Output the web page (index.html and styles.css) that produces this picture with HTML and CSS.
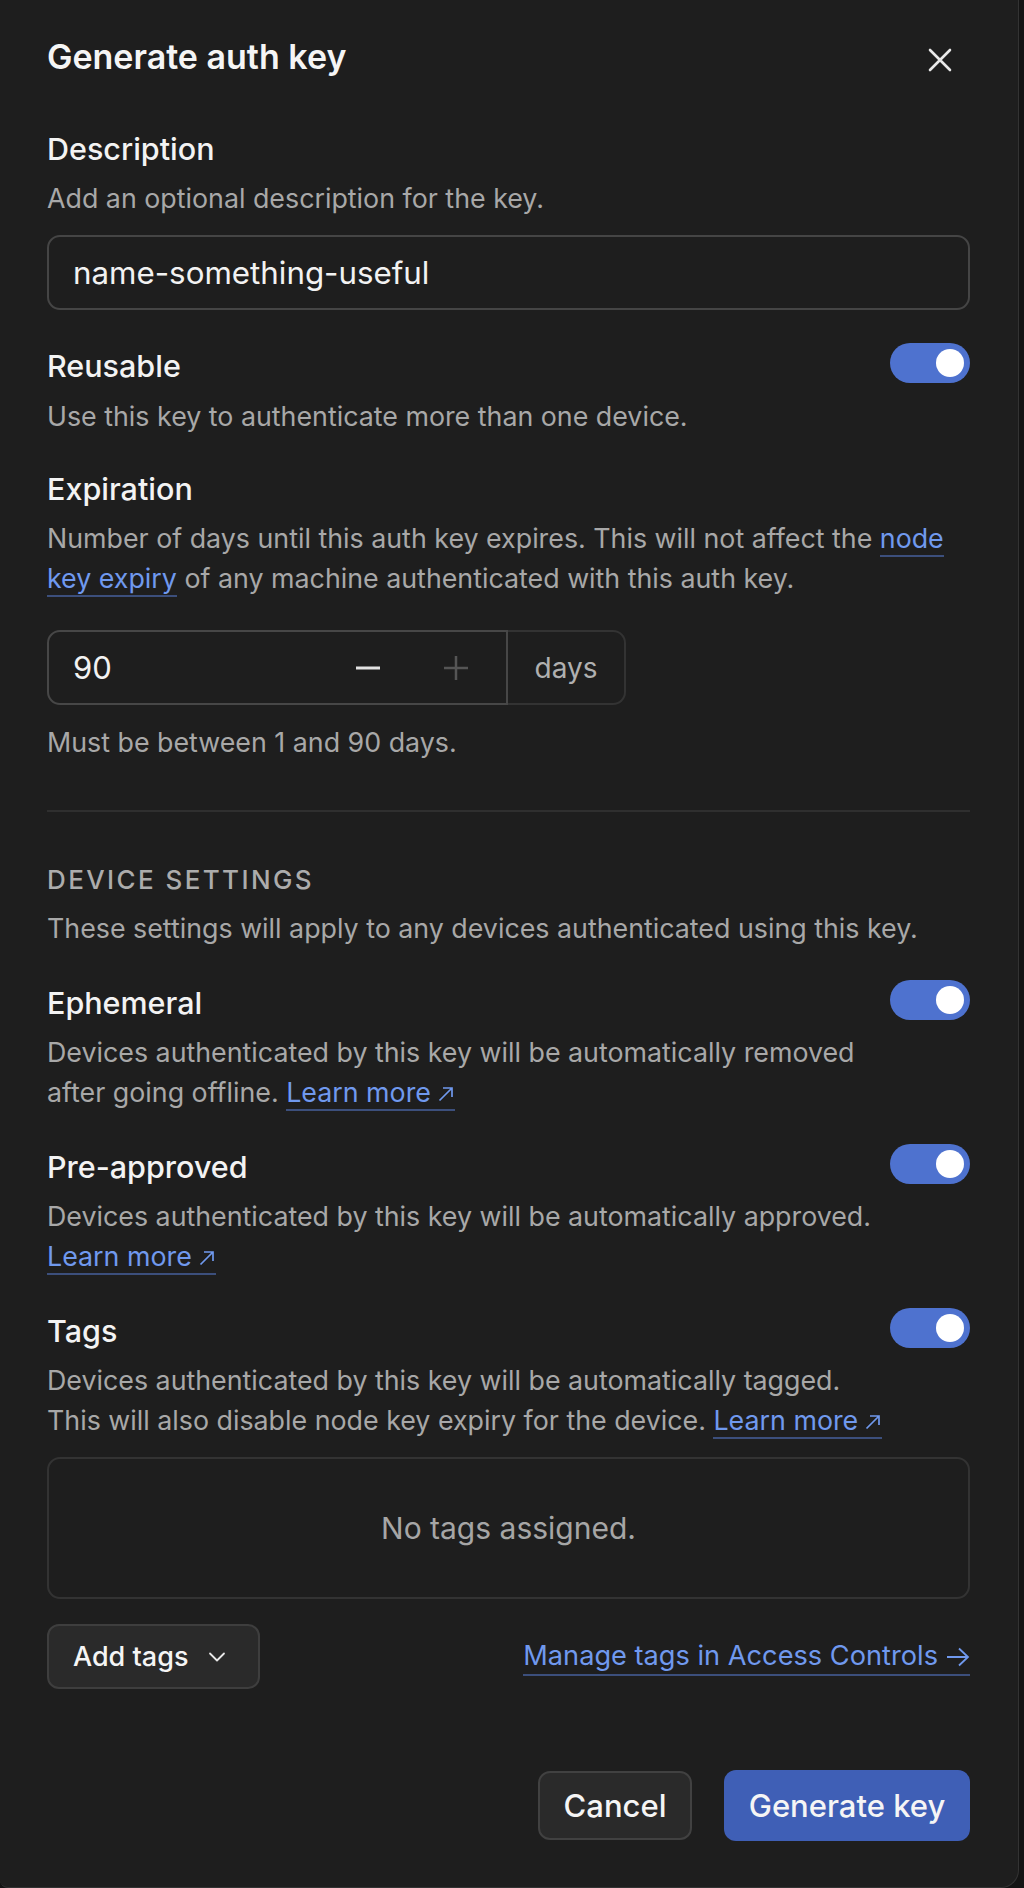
FILE: index.html
```html
<!DOCTYPE html>
<html lang="en">
<head>
<meta charset="utf-8">
<title>Generate auth key</title>
<link rel="stylesheet" href="styles.css">
</head>
<body>
<div class="dialog">
  <div class="header">
    <h1 class="title">Generate auth key</h1>
    <button class="close" aria-label="Close">
      <svg width="24" height="24" viewBox="0 0 24 24"><path d="M2 2L22 22M22 2L2 22" stroke="#e8e8e8" stroke-width="2.6" stroke-linecap="round"/></svg>
    </button>
  </div>

  <section class="field first">
    <div class="label">Description</div>
    <p class="hint">Add an optional description for the key.</p>
    <div class="text-input">name-something-useful</div>
  </section>

  <section class="field reusable">
    <div class="row">
      <div class="label">Reusable</div>
      <span class="toggle"><span class="knob"></span></span>
    </div>
    <p class="hint">Use this key to authenticate more than one device.</p>
  </section>

  <section class="field expiration">
    <div class="label">Expiration</div>
    <p class="hint">Number of days until this auth key expires. This will not affect the <a class="link">node key expiry</a> of any machine authenticated with this auth key.</p>
    <div class="number-group">
      <div class="number-input">
        <span class="number-value">90</span>
        <span class="stepper">
          <svg width="24" height="24" viewBox="0 0 24 24"><path d="M0 12H24" stroke="#e2e2e2" stroke-width="3"/></svg>
        </span>
        <span class="stepper">
          <svg width="24" height="24" viewBox="0 0 24 24"><path d="M0 12H24M12 0V24" stroke="#555" stroke-width="2.5"/></svg>
        </span>
      </div>
      <div class="addon">days</div>
    </div>
    <p class="hint help">Must be between 1 and 90 days.</p>
  </section>

  <hr class="divider">

  <section class="group">
    <div class="eyebrow">DEVICE SETTINGS</div>
    <p class="hint">These settings will apply to any devices authenticated using this key.</p>
  </section>

  <section class="field toggle-field">
    <div class="row">
      <div class="label">Ephemeral</div>
      <span class="toggle"><span class="knob"></span></span>
    </div>
    <p class="hint narrow">Devices authenticated by this key will be automatically removed after going offline. <a class="link">Learn more<svg class="ext" width="18" height="18" viewBox="0 0 18 18"><path d="M2.5 15.5L15 3M6 3H15V12" fill="none" stroke="#7099ee" stroke-width="1.7"/></svg></a></p>
  </section>

  <section class="field toggle-field">
    <div class="row">
      <div class="label">Pre-approved</div>
      <span class="toggle"><span class="knob"></span></span>
    </div>
    <p class="hint narrow">Devices authenticated by this key will be automatically approved. <a class="link">Learn more<svg class="ext" width="18" height="18" viewBox="0 0 18 18"><path d="M2.5 15.5L15 3M6 3H15V12" fill="none" stroke="#7099ee" stroke-width="1.7"/></svg></a></p>
  </section>

  <section class="field toggle-field">
    <div class="row">
      <div class="label">Tags</div>
      <span class="toggle"><span class="knob"></span></span>
    </div>
    <p class="hint narrow">Devices authenticated by this key will be automatically tagged.<br>This will also disable node key expiry for the device. <a class="link">Learn more<svg class="ext" width="18" height="18" viewBox="0 0 18 18"><path d="M2.5 15.5L15 3M6 3H15V12" fill="none" stroke="#7099ee" stroke-width="1.7"/></svg></a></p>
    <div class="tags-box">No tags assigned.</div>
    <div class="tags-actions">
      <button class="btn add-tags">Add tags
        <svg width="18" height="10" viewBox="0 0 18 10"><path d="M2 1.5L9 8.5L16 1.5" fill="none" stroke="#e8e8e8" stroke-width="1.8" stroke-linecap="round" stroke-linejoin="round"/></svg>
      </button>
      <a class="link manage">Manage tags in Access Controls<svg class="arr" width="24" height="20" viewBox="0 0 24 20"><path d="M1 10H22M13 1.5L22 10L13 18.5" fill="none" stroke="#7099ee" stroke-width="1.8"/></svg></a>
    </div>
  </section>

  <div class="footer">
    <button class="btn cancel">Cancel</button>
    <button class="btn primary">Generate key</button>
  </div>
</div>
</body>
</html>
```

FILE: styles.css
```css
* { box-sizing: border-box; }
html, body { margin: 0; padding: 0; }
body {
  background: #141414;
  font-family: "Inter", "Noto Sans", sans-serif;
  color: #f1f1f1;
  width: 1024px;
  height: 1888px;
  overflow: hidden;
}
.dialog {
  width: 1019px;
  height: 1888px;
  background: #1e1e1e;
  border-right: 1px solid #333;
  border-bottom: 1px solid #333;
  border-bottom-right-radius: 18px;
  border-bottom-left-radius: 8px;
  padding: 37px 48px 0 47px;
  display: flex;
  flex-direction: column;
}
.header {
  display: flex;
  justify-content: space-between;
  align-items: center;
  height: 40px;
}
.title {
  margin: 0;
  font-size: 34px;
  line-height: 40px;
  font-weight: 600;
  color: #f5f5f5;
}
.close {
  background: none;
  border: 0;
  padding: 0;
  margin-right: 18px;
  margin-top: 6px;
  width: 24px;
  height: 24px;
  display: flex;
}
.field { display: flex; flex-direction: column; }
.field.first { margin-top: 52px; }
.field.reusable { margin-top: 33px; }
.field.expiration { margin-top: 33.5px; }
.field.toggle-field { margin-top: 31.5px; }
.label {
  font-size: 30.5px;
  line-height: 40px;
  font-weight: 500;
  color: #f3f3f3;
}
.hint {
  margin: 9px 0 0;
  font-size: 26.8px;
  line-height: 40px;
  color: #a8a8a8;
}
.row {
  display: flex;
  justify-content: space-between;
  align-items: flex-start;
  height: 40px;
}
.row .label { line-height: 34px; padding-top: 6px; }
.row + .hint { margin-top: 12.5px; }
.hint.narrow { max-width: 860px; }
.link {
  color: #7099ee;
  text-decoration: none;
  border-bottom: 2px solid #3c4f7c;
  padding-bottom: 1px;
}
.ext { margin-left: 6px; vertical-align: -1px; }
.text-input {
  margin-top: 17px;
  height: 75px;
  border: 2px solid #454545;
  border-radius: 13px;
  padding: 0 24px;
  display: flex;
  align-items: center;
  font-size: 31.3px;
  color: #f2f2f2;
}
.toggle {
  width: 80px;
  height: 40px;
  border-radius: 20px;
  background: #4e72cf;
  display: flex;
  justify-content: flex-end;
  align-items: center;
  padding-right: 6px;
}
.knob {
  width: 28px;
  height: 28px;
  border-radius: 50%;
  background: #fff;
}
.number-group {
  margin-top: 32px;
  display: flex;
  height: 75px;
}
.number-input {
  width: 461px;
  border: 2px solid #474747;
  border-radius: 13px 0 0 13px;
  display: flex;
  align-items: center;
  padding-left: 24px;
}
.number-value { font-size: 31px; color: #f2f2f2; flex: 1; }
.stepper { width: 24px; height: 24px; display: flex; margin-right: 64px; }
.stepper + .stepper { margin-right: 38px; }
.addon {
  width: 118px;
  border: 2px solid #333;
  border-left: 0;
  border-radius: 0 13px 13px 0;
  display: flex;
  align-items: center;
  justify-content: center;
  font-size: 28px;
  color: #b0b0b0;
}
.hint.help { margin-top: 17px; }
.divider {
  margin: 48px 0 0;
  border: 0;
  height: 2px;
  background: #2f2f2f;
}
.group { margin-top: 48px; display: flex; flex-direction: column; }
.eyebrow {
  font-size: 26px;
  line-height: 40px;
  letter-spacing: 2.4px;
  color: #acacac;
  font-weight: 500;
}
.group .hint { margin-top: 8px; }
.group + .field.toggle-field { margin-top: 31.5px; }
.tags-box {
  margin-top: 17px;
  height: 142px;
  border: 2px solid #333;
  border-radius: 13px;
  display: flex;
  align-items: center;
  justify-content: center;
  font-size: 30px;
  color: #a6a6a6;
}
.tags-actions {
  margin-top: 25px;
  display: flex;
  justify-content: space-between;
  align-items: center;
}
.btn {
  font-family: inherit;
  font-weight: 500;
  color: #f5f5f5;
  border-radius: 12px;
  cursor: pointer;
}
.add-tags {
  width: 213px;
  height: 65px;
  background: #2a2a2a;
  border: 2px solid #3e3e3e;
  font-size: 27px;
  display: flex;
  align-items: center;
  padding: 0 0 0 24px;
  gap: 20px;
}
.manage { font-size: 27.2px; line-height: 34px; margin-top: 2px; }
.arr { margin-left: 8px; vertical-align: -2px; }
.footer {
  margin-top: 81px;
  display: flex;
  justify-content: flex-end;
  gap: 32px;
  align-items: center;
}
.cancel {
  width: 154px;
  height: 69px;
  background: #2a2a2a;
  border: 2px solid #414141;
  font-size: 31px;
}
.primary {
  width: 246px;
  height: 71px;
  background: #3f5fb6;
  border: 0;
  font-size: 31px;
}
```
